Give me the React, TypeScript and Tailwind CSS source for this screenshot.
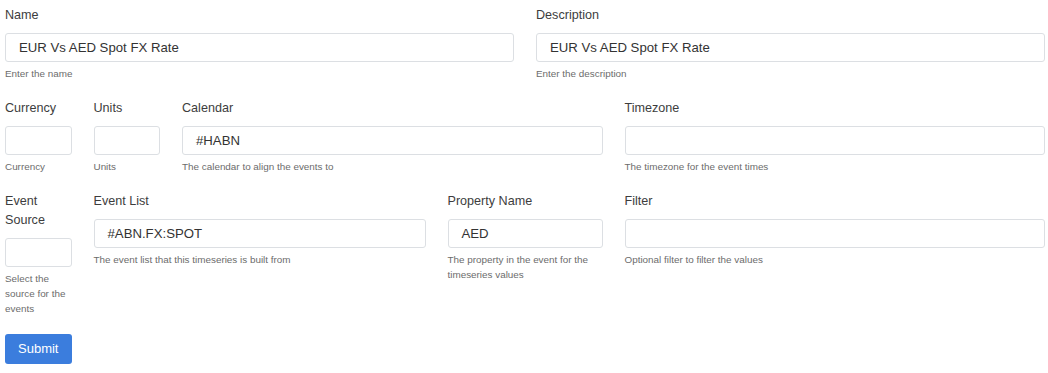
import React from "react";

type FieldProps = {
  label: React.ReactNode;
  value?: string;
  help?: React.ReactNode;
  span: string;
};

function Field({ label, value = "", help, span }: FieldProps) {
  return (
    <div className={span}>
      <label className="block text-[12.6px] leading-[19px] text-[#3d3d3d]">{label}</label>
      <div className="mt-[8px] h-[29px] rounded-[3px] border border-[#dcdfe3] bg-white pl-[13px] flex items-center text-[13.2px] text-[#333]">
        {value}
      </div>
      {help && (
        <div className="mt-[4px] text-[9.9px] leading-[15px] text-[#6c6c6c]">{help}</div>
      )}
    </div>
  );
}

export default function App() {
  return (
    <div
      className="w-[1048px] h-[373px] bg-white pl-[5px] pr-[3px] pt-[6px]"
      style={{ fontFamily: '"Liberation Sans", Arial, sans-serif' }}
    >
      <div className="flex flex-col gap-[18px]">
        <div className="grid grid-cols-12 gap-x-[22px]">
          <Field span="col-span-6" label="Name" value="EUR Vs AED Spot FX Rate" help="Enter the name" />
          <Field span="col-span-6" label="Description" value="EUR Vs AED Spot FX Rate" help="Enter the description" />
        </div>
        <div className="grid grid-cols-12 gap-x-[22px]">
          <Field span="col-span-1" label="Currency" help="Currency" />
          <Field span="col-span-1" label="Units" help="Units" />
          <Field span="col-span-5" label="Calendar" value="#HABN" help="The calendar to align the events to" />
          <Field span="col-span-5" label="Timezone" help="The timezone for the event times" />
        </div>
        <div className="grid grid-cols-12 gap-x-[22px] items-start">
          <Field
            span="col-span-1"
            label={<>Event<br />Source</>}
            help={<>Select the<br />source for the<br />events</>}
          />
          <Field span="col-span-4" label="Event List" value="#ABN.FX:SPOT" help="The event list that this timeseries is built from" />
          <Field
            span="col-span-2"
            label="Property Name"
            value="AED"
            help={<>The property in the event for the<br />timeseries values</>}
          />
          <Field span="col-span-5" label="Filter" help="Optional filter to filter the values" />
        </div>
        <div className="grid grid-cols-12 gap-x-[22px]">
          <button className="col-span-1 h-[30px] rounded-[3px] bg-[#3b7ddd] text-white text-[13px]">
            Submit
          </button>
        </div>
      </div>
    </div>
  );
}
